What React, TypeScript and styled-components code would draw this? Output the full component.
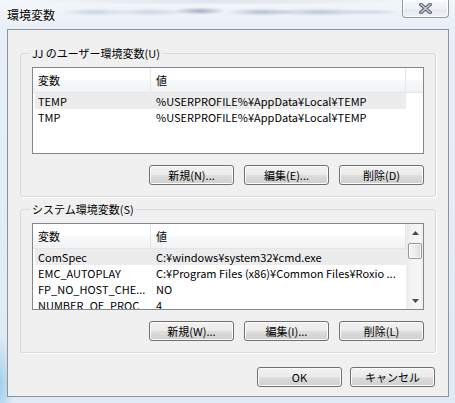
import React from 'react';
import styled, { createGlobalStyle } from 'styled-components';

const FONT = `"Noto Sans CJK JP", "Noto Sans", sans-serif`;

const Global = createGlobalStyle`
  html, body { margin: 0; padding: 0; }
  body {
    width: 455px; height: 403px; overflow: hidden;
    background: #e3edf6;
    font-family: ${FONT};
    font-size: 11px;
    color: #000;
  }
`;

const Window = styled.div`
  width: 455px;
  height: 403px;
  box-sizing: border-box;
  padding: 0 6px 6px 7px;
  display: flex;
  flex-direction: column;
  background:
    radial-gradient(34px 4px at 95px 12px, rgba(70, 95, 135, 0.22), transparent),
    radial-gradient(40px 4px at 150px 12px, rgba(70, 95, 135, 0.2), transparent),
    radial-gradient(26px 4px at 200px 11px, rgba(40, 60, 110, 0.38), transparent),
    radial-gradient(36px 4px at 262px 12px, rgba(50, 70, 115, 0.3), transparent),
    radial-gradient(50px 4px at 320px 12px, rgba(60, 80, 125, 0.28), transparent),
    radial-gradient(30px 3px at 372px 12px, rgba(70, 95, 135, 0.18), transparent),
    radial-gradient(200px 4px at 220px 1px, rgba(120, 140, 170, 0.18), transparent),
    radial-gradient(14px 50px at 0 385px, rgba(110, 185, 225, 0.55), transparent),
    linear-gradient(to bottom, #f3f6fa 0, #e8eff7 30px, #dfeaf4 100%);
`;

const TitleBar = styled.div`
  height: 29px;
  display: flex;
  justify-content: space-between;
  align-items: flex-start;
`;

const Title = styled.div`
  padding-top: 8px;
  font-size: 12px;
  line-height: 14px;
  color: #000;
  text-shadow: 0 0 6px #fff, 0 0 3px #fff;
`;

const CloseButton = styled.button`
  width: 47px;
  height: 18px;
  box-sizing: border-box;
  margin: 0;
  padding: 0;
  border: 1px solid #8f98a4;
  border-top: none;
  border-radius: 0 0 4px 4px;
  background: linear-gradient(to bottom, #f7f9fb 0%, #edf1f5 50%, #e3e8ee 51%, #eef2f6 100%);
  box-shadow: inset 0 0 0 1px rgba(255, 255, 255, 0.8);
  display: flex;
  align-items: center;
  justify-content: center;
`;

const Client = styled.div`
  flex: 1;
  background: #f0f0f0;
  border: 1px solid #8a949e;
  padding: 0 12px;
  display: flex;
  flex-direction: column;
`;

const Group = styled.fieldset<{ $top: number }>`
  margin: ${(p) => p.$top}px 0 0;
  padding: 7px 11px 11px;
  min-width: 0;
  border: 1px solid #d5dadf;
  border-radius: 3px;
  box-shadow: 1px 1px 0 #fff;
`;

const Legend = styled.legend`
  margin-left: -2px;
  padding: 0 2px;
  font-size: 11px;
  line-height: 14px;
  color: #000;
`;

const ListBox = styled.div`
  height: 87px;
  box-sizing: border-box;
  border: 1px solid #828790;
  background: #fff;
  display: flex;
  overflow: hidden;
`;

const ListBody = styled.div`
  flex: 1;
  min-width: 0;
  display: flex;
  flex-direction: column;
`;

const Header = styled.div`
  height: 25px;
  flex: none;
  display: grid;
  grid-template-columns: 118px 255px 1fr;
  background: linear-gradient(to bottom, #ffffff 0%, #ffffff 45%, #f7f8fa 55%, #f2f3f5 100%);
  border-bottom: 1px solid #e3e5e8;
  box-sizing: border-box;
`;

const HeaderCell = styled.div`
  padding: 1px 0 0 5px;
  line-height: 23px;
  border-right: 1px solid #e3e5e8;
  white-space: nowrap;
  overflow: hidden;
`;

const Row = styled.div<{ $selected?: boolean }>`
  margin-left: 2px;
  width: 371px;
  height: 16px;
  flex: none;
  display: grid;
  grid-template-columns: 116px 255px;
  background: ${(p) => (p.$selected ? '#ececec' : 'transparent')};
`;

const Cell = styled.div<{ $pad: number }>`
  padding-left: ${(p) => p.$pad}px;
  line-height: 16px;
  white-space: nowrap;
  overflow: hidden;
`;

const ScrollBar = styled.div`
  width: 17px;
  flex: none;
  display: flex;
  flex-direction: column;
  background: linear-gradient(to right, #e6e6e6 0%, #f1f1f1 15%, #f6f6f6 80%, #ededed 100%);
  border-left: 1px solid #f0f0f0;
  box-sizing: border-box;
`;

const ArrowButton = styled.div`
  height: 17px;
  flex: none;
  display: flex;
  align-items: center;
  justify-content: center;
`;

const Thumb = styled.div`
  margin: 2px 1px 0;
  height: 16px;
  flex: none;
  box-sizing: border-box;
  border: 1px solid #979797;
  border-radius: 2px;
  background: linear-gradient(to right, #f4f4f4 0%, #ececec 50%, #dcdcdc 100%);
  box-shadow: inset 0 0 0 1px rgba(255, 255, 255, 0.7);
`;

const Track = styled.div`
  flex: 1;
`;

const ButtonRow = styled.div<{ $top: number; $gap: number; $right?: number }>`
  display: flex;
  justify-content: flex-end;
  gap: ${(p) => p.$gap}px;
  margin-top: ${(p) => p.$top}px;
  padding-right: ${(p) => p.$right ?? 0}px;
`;

const Button = styled.button`
  width: 85px;
  height: 20px;
  box-sizing: border-box;
  margin: 0;
  padding: 0;
  border: 1px solid #707070;
  border-radius: 3px;
  background: linear-gradient(to bottom, #f2f2f2 0%, #ebebeb 48%, #dddddd 52%, #cfcfcf 100%);
  box-shadow: inset 0 0 0 1px #fcfcfc;
  font-family: ${FONT};
  font-size: 11px;
  line-height: 16px;
  color: #000;
`;

const Arrow = ({ up }: { up?: boolean }) => (
  <svg width="7" height="4" viewBox="0 0 7 4">
    <polygon points={up ? '3.5,0 7,4 0,4' : '0,0 7,0 3.5,4'} fill="#4a4a4a" />
  </svg>
);

const CloseIcon = () => (
  <svg width="13" height="11" viewBox="0 0 13 11">
    <path d="M2 1.5 L11 9.5 M11 1.5 L2 9.5" stroke="#5c6470" strokeWidth="3.6" strokeLinecap="square" />
    <path d="M2 1.5 L11 9.5 M11 1.5 L2 9.5" stroke="#c9ced5" strokeWidth="1.4" strokeLinecap="square" />
  </svg>
);

type Item = { name: string; value: string; selected?: boolean };

const userVars: Item[] = [
  { name: 'TEMP', value: '%USERPROFILE%¥AppData¥Local¥TEMP', selected: true },
  { name: 'TMP', value: '%USERPROFILE%¥AppData¥Local¥TEMP' },
];

const sysVars: Item[] = [
  { name: 'ComSpec', value: 'C:¥windows¥system32¥cmd.exe', selected: true },
  { name: 'EMC_AUTOPLAY', value: 'C:¥Program Files (x86)¥Common Files¥Roxio ...' },
  { name: 'FP_NO_HOST_CHE...', value: 'NO' },
  { name: 'NUMBER_OF_PROC', value: '4' },
];

const VarList = ({ items, scroll }: { items: Item[]; scroll?: boolean }) => (
  <ListBox>
    <ListBody>
      <Header>
        <HeaderCell>変数</HeaderCell>
        <HeaderCell>値</HeaderCell>
        {!scroll && <div />}
      </Header>
      {items.map((it) => (
        <Row key={it.name} $selected={it.selected}>
          <Cell $pad={3}>{it.name}</Cell>
          <Cell $pad={5}>{it.value}</Cell>
        </Row>
      ))}
    </ListBody>
    {scroll && (
      <ScrollBar>
        <ArrowButton>
          <Arrow up />
        </ArrowButton>
        <Thumb />
        <Track />
        <ArrowButton>
          <Arrow />
        </ArrowButton>
      </ScrollBar>
    )}
  </ListBox>
);

export default function App() {
  return (
    <>
      <Global />
      <Window>
        <TitleBar>
          <Title>環境変数</Title>
          <CloseButton aria-label="閉じる">
            <CloseIcon />
          </CloseButton>
        </TitleBar>
        <Client>
          <Group $top={16}>
            <Legend>JJ のユーザー環境変数(U)</Legend>
            <VarList items={userVars} />
            <ButtonRow $top={11} $gap={10}>
              <Button>新規(N)...</Button>
              <Button>編集(E)...</Button>
              <Button>削除(D)</Button>
            </ButtonRow>
          </Group>
          <Group $top={5}>
            <Legend>システム環境変数(S)</Legend>
            <VarList items={sysVars} scroll />
            <ButtonRow $top={11} $gap={10}>
              <Button>新規(W)...</Button>
              <Button>編集(I)...</Button>
              <Button>削除(L)</Button>
            </ButtonRow>
          </Group>
          <ButtonRow $top={14} $gap={8} $right={1}>
            <Button>OK</Button>
            <Button>キャンセル</Button>
          </ButtonRow>
        </Client>
      </Window>
    </>
  );
}
